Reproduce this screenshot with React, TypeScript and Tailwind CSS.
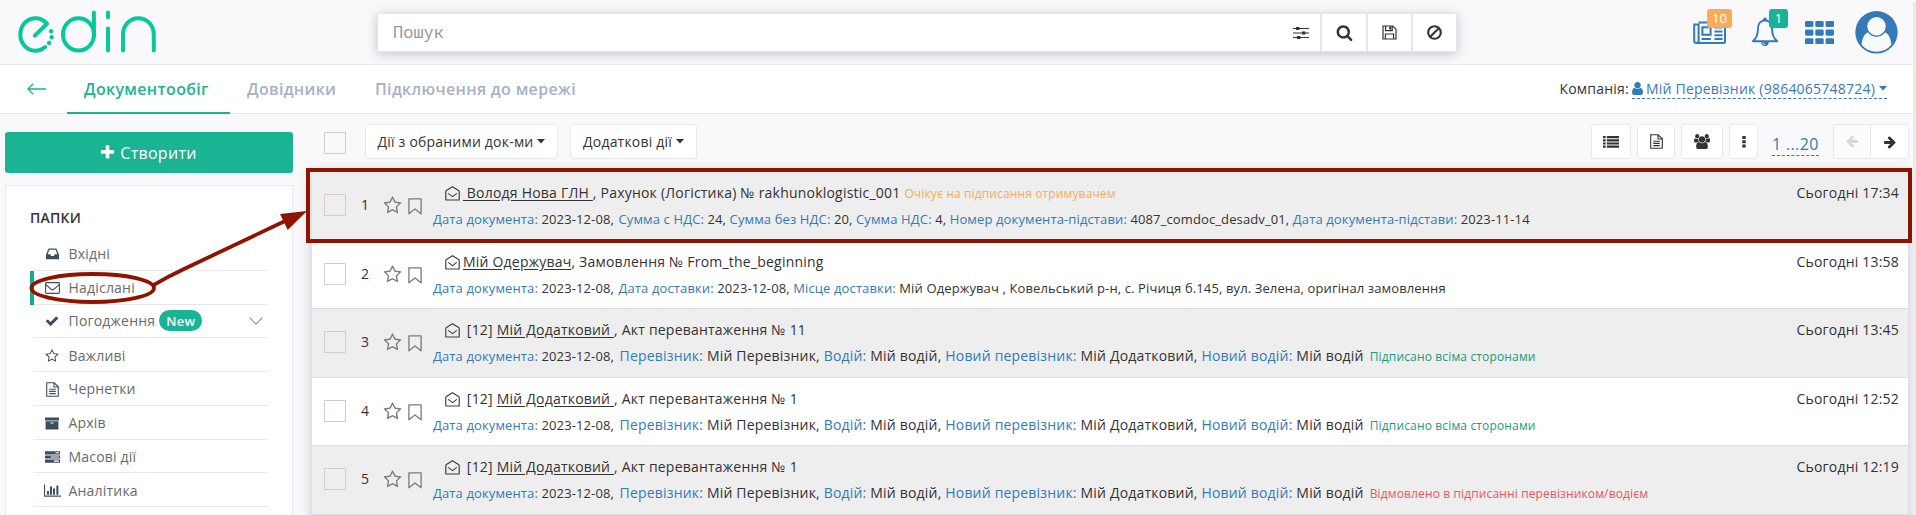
import React, { ReactNode } from "react";

/* ---------- icons ---------- */

type IconProps = { className?: string };

const PLUS =
  "M1600 736v192q0 40-28 68t-68 28h-416v416q0 40-28 68t-68 28h-192q-40 0-68-28t-28-68v-416h-416q-40 0-68-28t-28-68v-192q0-40 28-68t68-28h416v-416q0-40 28-68t68-28h192q40 0 68 28t28 68v416h416q40 0 68 28t28 68z";
const SEARCH =
  "M1216 832q0-185-131.5-316.5t-316.5-131.5-316.5 131.5-131.5 316.5 131.5 316.5 316.5 131.5 316.5-131.5 131.5-316.5zm512 832q0 52-38 90t-90 38q-54 0-90-38l-343-342q-179 124-399 124-143 0-273.5-55.5t-225-150-150-225-55.5-273.5 55.5-273.5 150-225 225-150 273.5-55.5 273.5 55.5 225 150 150 225 55.5 273.5q0 220-124 399l343 343q37 37 37 90z";
const CHECK =
  "M1671 566q0 40-28 68l-724 724-136 136q-28 28-68 28t-68-28l-136-136-362-362q-28-28-28-68t28-68l136-136q28-28 68-28t68 28l294 295 656-657q28-28 68-28t68 28l136 136q28 28 28 68z";
const ARROW_RIGHT =
  "M1600 960q0 54-37 91l-651 651q-39 37-91 37-51 0-90-37l-75-75q-38-38-38-91t38-91l293-293h-704q-52 0-84.5-37.5t-32.5-90.5v-128q0-53 32.5-90.5t84.5-37.5h704l-293-294q-38-36-38-90t38-90l75-75q38-38 90-38 53 0 91 38l651 651q37 35 37 90z";
const USER =
  "M1536 1399q0 109-62.5 187t-150.5 78h-854q-88 0-150.5-78t-62.5-187q0-85 8.5-160.5t31.5-152 58.5-131 94-89 134.5-34.5q131 128 313 128t313-128q76 0 134.5 34.5t94 89 58.5 131 31.5 152 8.5 160.5zm-256-887q0 159-112.5 271.5t-271.5 112.5-271.5-112.5-112.5-271.5 112.5-271.5 271.5-112.5 271.5 112.5 112.5 271.5z";
const STAR =
  "M1201 1004l306-297-422-62-189-382-189 382-422 62 306 297-73 421 378-199 377 199zm527-357q0 22-26 48l-363 354 86 500q1 7 1 20 0 50-41 50-19 0-40-12l-449-236-449 236q-22 12-40 12-21 0-31.5-14.5t-10.5-35.5q0-6 2-20l86-500-364-354q-25-27-25-48 0-37 56-46l502-73 225-455q19-41 49-41t49 41l225 455 502 73q56 9 56 46z";
const USERS =
  "M593 896q-162 5-265 128h-134q-82 0-138-40.5t-56-118.5q0-353 124-353 6 0 43.5 21t97.5 42.5 119 21.5q67 0 133-23-5 37-5 66 0 159 93 293zm1071 637q0 120-73 189.5t-194 69.5h-874q-121 0-194-69.5t-73-189.5q0-53 3.5-103.5t14-109 26.5-108.5 43-97.5 62-81 85.5-53.5 111.5-20q10 0 43 21.5t73 48 107 48 135 21.5 135-21.5 107-48 73-48 43-21.5q61 0 111.5 20t85.5 53.5 62 81 43 97.5 26.5 108.5 14 109 3.5 103.5zm-1024-1277q0 106-75 181t-181 75-181-75-75-181 75-181 181-75 181 75 75 181zm704 384q0 159-112.5 271.5t-271.5 112.5-271.5-112.5-112.5-271.5 112.5-271.5 271.5-112.5 271.5 112.5 112.5 271.5zm576 225q0 78-56 118.5t-138 40.5h-134q-103-123-265-128 93-134 93-293 0-29-5-66 66 23 133 23 59 0 119-21.5t97.5-42.5 43.5-21q124 0 124 353zm-128-609q0 106-75 181t-181 75-181-75-75-181 75-181 181-75 181 75 75 181z";

function Glyph({ d, className = "", box = "0 0 1792 1792" }: IconProps & { d: string; box?: string }) {
  return (
    <svg viewBox={box} fill="currentColor" className={`shrink-0 ${className}`}>
      <path d={d} />
    </svg>
  );
}

function Logo() {
  return (
    <svg viewBox="0 0 142 46" className="h-[46px] w-[142px]" fill="none" stroke="#07c79c" strokeWidth="4" strokeLinecap="round" strokeLinejoin="round">
      <path d="M18.8 27.6 31 15.8A15.2 16.3 0 1 0 29.2 39" />
      <ellipse cx="62.5" cy="26.4" rx="15.5" ry="16.2" />
      <path d="M77.9 4.4V26M92 4.4V9.2M92 20.6V42.6M107 42.6V26.4A15.4 16.2 0 0 1 137.8 26.4V42.6" />
      <g fill="#07c79c" stroke="none">
        <circle cx="35.1" cy="23.3" r="2.2" />
        <circle cx="35.7" cy="29.3" r="2.2" />
        <circle cx="33.1" cy="35" r="2.2" />
      </g>
    </svg>
  );
}

function Sliders() {
  return (
    <svg viewBox="0 0 16 14" className="h-[14px] w-4" stroke="currentColor" fill="currentColor">
      <path d="M0 2.5h16M0 7h16M0 11.5h16" strokeWidth="1.2" fill="none" />
      <path stroke="none" d="M3 1h3.4v3H3zM9 5.5h3.4v3H9zM4 10h3.4v3H4z" />
    </svg>
  );
}

function Floppy() {
  return (
    <svg viewBox="0 0 15 15" className="h-[15px] w-[15px]" fill="none" stroke="currentColor" strokeWidth="1.2">
      <path d="M1 1h9.8L14 4.2V14H1z M3.4 14V9h8.2v5" />
      <path d="M3.6 1v4.6h6.6V1" />
      <path d="M7.2 1.4h2v3.2h-2z" fill="currentColor" stroke="none" />
    </svg>
  );
}

function Ban() {
  return (
    <svg viewBox="0 0 15 15" className="h-[15px] w-[15px]" fill="none" stroke="currentColor" strokeWidth="2.1">
      <circle cx="7.5" cy="7.5" r="6.3" />
      <path d="M3.2 11.8 11.8 3.2" />
    </svg>
  );
}

function Newspaper() {
  return (
    <svg viewBox="0 0 34 24" className="h-6 w-[34px]" fill="none" stroke="currentColor" strokeWidth="2">
      <path d="M5.6 1.4H32V20.4Q32 22 30.2 22H3.6Q1.2 22 1.2 19.8V3.4H5.6V20Q5.6 22 3.6 22" />
      <path d="M9.4 6.2H17.6V13.8H9.4zM21.5 6.4H29.5M21.5 10.4H29.5M21.5 14.2H29.5M8.6 18H17.8M21.5 18H29.5" />
    </svg>
  );
}

function Bell() {
  return (
    <svg viewBox="0 0 28 30" className="h-[30px] w-7" fill="none" stroke="currentColor" strokeWidth="1.9" strokeLinejoin="round">
      <path d="M14 3.2C9.2 3.6 7 7.4 7 11.4C7 17.6 5.6 21.2 1.8 24.2H26.2C22.4 21.2 21 17.6 21 11.4C21 7.4 18.8 3.6 14 3.2z" />
      <circle cx="14" cy="2.2" r="1.8" fill="currentColor" stroke="none" />
      <path d="M10.2 25A3.8 4 0 0 0 17.8 25z" fill="currentColor" stroke="none" />
      <path d="M11.8 25.4A2.2 2.2 0 0 0 14 27.6" stroke="#f9f9fb" strokeWidth=".8" />
    </svg>
  );
}

function AppsGrid() {
  return (
    <svg viewBox="0 0 29 23" className="h-[23px] w-[29px]" fill="currentColor">
      {[0, 8.6, 17.2].map((y) => [0, 10.3, 20.6].map((x) => <rect key={`${x}-${y}`} x={x} y={y} width="8.4" height="6.1" rx="1.4" />))}
    </svg>
  );
}

function Avatar() {
  return (
    <svg viewBox="0 0 43 43" className="h-[43px] w-[43px]">
      <circle cx="21.5" cy="21.3" r="21.2" fill="#337ab7" />
      <path d="M6.6 33.8C7.2 26.8 9.8 22.2 13.4 21.2C18 27 25 27 29.6 21.2C33.2 22.2 35.8 26.8 36.4 33.8A19.4 19.4 0 0 1 6.6 33.8z" fill="#f9f9fb" />
      <circle cx="21.5" cy="15.4" r="10.4" fill="#337ab7" />
      <circle cx="21.5" cy="15.2" r="9.2" fill="#f9f9fb" />
    </svg>
  );
}

function Caret({ className = "" }: IconProps) {
  return <Glyph d="M0 0H8L4 4.6z" box="0 0 8 5" className={`h-[5px] w-2 ${className}`} />;
}

function ListIcon() {
  return (
    <svg viewBox="0 0 16 12" className="h-3 w-4" fill="currentColor">
      {[0, 3.2, 6.4, 9.6].map((y) => (
        <path key={y} d={`M0 ${y}h2.6v2.2H0zM3.8 ${y}H16v2.2H3.8z`} />
      ))}
    </svg>
  );
}

function FileText({ className = "" }: IconProps) {
  return (
    <svg viewBox="0 0 13 15" className={`h-[15px] w-[13px] ${className}`} fill="none" stroke="currentColor" strokeWidth="1.1">
      <path d="M.7 .8H8.2L12.3 4.8V14.2H.7zM8 .8V5H12.3M3.2 7.2H9.8M3.2 9.4H9.8M3.2 11.6H9.8" />
    </svg>
  );
}

function Dots() {
  return (
    <svg viewBox="0 0 4 12" className="h-3 w-1" fill="currentColor">
      <path d="M.3 0h3.4v3H.3zM.3 4.3h3.4v3H.3zM.3 8.6h3.4v3H.3z" />
    </svg>
  );
}

function Inbox() {
  return (
    <svg viewBox="0 0 13 12" className="h-3 w-[13px]" fill="currentColor" fillRule="evenodd">
      <path d="M2.6 .4H10.4L13 6.4V11.2H0V6.4zM3.4 1.8 1.6 6.2H4.2L5.2 8H7.8L8.8 6.2H11.4L9.6 1.8z" />
    </svg>
  );
}

function Envelope() {
  return (
    <svg viewBox="0 0 15 12" className="h-3 w-[15px]" fill="none" stroke="currentColor" strokeWidth="1.1">
      <rect x=".6" y=".6" width="13.8" height="10.8" rx=".8" />
      <path d="M.8 2.6 6.2 7.2Q7.5 8.2 8.8 7.2L14.2 2.6" />
    </svg>
  );
}

function ArchiveBox() {
  return (
    <svg viewBox="0 0 14 13" className="h-[13px] w-[14px]" fill="currentColor" fillRule="evenodd">
      <path d="M0 .4H14V3.4H0zM.6 4.2H13.4V12.6H.6zM5.4 5.4V6.6H8.6V5.4z" />
    </svg>
  );
}

function Tasks() {
  return (
    <svg viewBox="0 0 15 12" className="h-3 w-[15px]" fill="currentColor" fillRule="evenodd">
      <path d="M0 .2H15V3.4H0zM10.4 1.2V2.3H14V1.2zM0 4.4H15V7.6H0zM5.6 5.4V6.5H14V5.4zM0 8.6H15V11.8H0zM9 9.6V10.7H14V9.6z" />
    </svg>
  );
}

function BarChart() {
  return (
    <svg viewBox="0 0 17 13" className="h-[13px] w-[17px]" fill="currentColor">
      <path d="M0 .4H1.1V11.6H17V12.7H0zM3 7H5V10.7H3zM6 2.6H8V10.7H6zM9 4.6H11V10.7H9zM12.4 1.4H14.4V10.7H12.4z" />
    </svg>
  );
}

function OpenEnvelope() {
  return (
    <svg viewBox="0 0 15 15" className="mt-[14px] h-[15px] w-[15px] shrink-0" fill="none" stroke="#3c3c3c" strokeWidth="1.15" strokeLinejoin="round">
      <path d="M.8 5.4Q.8 4.8 1.4 4.4L7.5 .7L13.6 4.4Q14.2 4.8 14.2 5.4V14H.8z" />
      <path d="M3.2 7.4 7.5 10.6 11.8 7.4" />
    </svg>
  );
}

function Bookmark() {
  return (
    <svg viewBox="0 0 14 17" className="h-[17px] w-[14px]" fill="none" stroke="#7b7b7b" strokeWidth="1.3" strokeLinejoin="round">
      <path d="M.9 .8H13.1V15.8L7 10.9L.9 15.8z" />
    </svg>
  );
}

/* ---------- data ---------- */

type Field = { label: string; value: string; big?: boolean };
type Doc = {
  time: string;
  prefix?: string;
  partner: string;
  title: string;
  note?: ReactNode;
  fields: Field[];
  status?: ReactNode;
};

const date: Field = { label: "Дата документа:", value: "2023-12-08" };
const transport: Field[] = [
  date,
  { label: "Перевізник:", value: "Мій Перевізник", big: true },
  { label: "Водій:", value: "Мій водій", big: true },
  { label: "Новий перевізник:", value: "Мій Додатковий", big: true },
  { label: "Новий водій:", value: "Мій водій", big: true },
];
const signed = <span className="ml-[6px] text-xs tracking-[0.15px] text-[#1b9a7f]">Підписано всіма сторонами</span>;

const docs: Doc[] = [
  {
    time: "17:34",
    partner: " Володя Нова ГЛН ",
    title: ", Рахунок (Логістика) № rakhunoklogistic_001",
    note: <span className="ml-1 text-xs tracking-[0.13px] text-[#f8ac59]">Очікує на підписання отримувачем</span>,
    fields: [
      date,
      { label: "Сумма с НДС:", value: "24" },
      { label: "Сумма без НДС:", value: "20" },
      { label: "Сумма НДС:", value: "4" },
      { label: "Номер документа-підстави:", value: "4087_comdoc_desadv_01" },
      { label: "Дата документа-підстави:", value: "2023-11-14" },
    ],
  },
  {
    time: "13:58",
    partner: "Мій Одержувач",
    title: ", Замовлення № From_the_beginning",
    fields: [
      date,
      { label: "Дата доставки:", value: "2023-12-08" },
      { label: "Місце доставки:", value: "Мій Одержувач , Ковельський р-н, с. Річиця б.145, вул. Зелена, оригінал замовлення" },
    ],
  },
  { time: "13:45", prefix: " [12] ", partner: "Мій Додатковий ", title: ", Акт перевантаження № 11", fields: transport, status: signed },
  { time: "12:52", prefix: " [12] ", partner: "Мій Додатковий ", title: ", Акт перевантаження № 1", fields: transport, status: signed },
  {
    time: "12:19",
    prefix: " [12] ",
    partner: "Мій Додатковий ",
    title: ", Акт перевантаження № 1",
    fields: transport,
    status: <span className="ml-[6px] text-xs tracking-[0.13px] text-[#ed5565]">Відмовлено в підписанні перевізником/водієм</span>,
  },
];

const folders: { label: string; icon: ReactNode; active?: boolean; isNew?: boolean }[] = [
  { label: "Вхідні", icon: <Inbox /> },
  { label: "Надіслані", icon: <Envelope />, active: true },
  { label: "Погодження", icon: <Glyph d={CHECK} className="h-[14px] w-[14px]" />, isNew: true },
  { label: "Важливі", icon: <Glyph d={STAR} className="h-[14px] w-[14px]" /> },
  { label: "Чернетки", icon: <FileText /> },
  { label: "Архів", icon: <ArchiveBox /> },
  { label: "Масові дії", icon: <Tasks /> },
  { label: "Аналітика", icon: <BarChart /> },
];

/* ---------- sections ---------- */

function Header() {
  return (
    <header className="flex h-[65px] shrink-0 border-b border-[#e7eaec]">
      <div className="w-[377px] pt-2 pl-4">
        <Logo />
      </div>
      <div className="mt-[13px] flex h-[39px] w-[1080px] border border-[#e5e6e7] bg-white text-[#333] shadow-[0_2px_10px_rgba(90,95,140,0.35)]">
        <div className="flex flex-1 items-center pb-[2px] pl-[15px] font-['Noto_Sans_Mono','DejaVu_Sans_Mono',monospace] text-[17px] text-[#999]">Пошук</div>
        <div className="flex w-[42px] items-center pl-[15px]"><Sliders /></div>
        <div className="flex w-[46px] items-center justify-center border-l-2 border-[#e5e6e7]"><Glyph d={SEARCH} className="h-[17px] w-[17px]" /></div>
        <div className="flex w-[45px] items-center justify-center border-l-2 border-[#e5e6e7]"><Floppy /></div>
        <div className="flex w-[45px] items-center justify-center border-l-2 border-[#e5e6e7]"><Ban /></div>
      </div>
      <div className="flex flex-1 items-start pl-[236px] text-[#337ab7]">
        <div className="relative mt-[21px] w-[58px]">
          <Newspaper />
          <span className="absolute -top-3 left-[14px] flex h-[19px] w-[25px] items-center justify-center rounded-[3px] bg-[#f8ac59] text-[13px] text-white">10</span>
        </div>
        <div className="relative mt-[17px] w-[54px]">
          <Bell />
          <span className="absolute -top-2 left-[18px] flex h-[19px] w-[19px] items-center justify-center rounded-[3px] bg-[#1ab394] text-[13px] text-white">1</span>
        </div>
        <div className="mt-[21px] w-[50px]"><AppsGrid /></div>
        <div className="mt-[11px]"><Avatar /></div>
      </div>
    </header>
  );
}

function Nav() {
  return (
    <nav className="flex h-[49px] shrink-0 border-b border-[#e7eaec] bg-white pr-[26px]">
      <div className="flex w-[67px] items-center pl-[27px]">
        <svg viewBox="0 0 19 12" className="h-3 w-[19px]" fill="none" stroke="#1ab394" strokeWidth="1.3">
          <path d="M1 6H19M6.2 .8 1 6l5.2 5.2" />
        </svg>
      </div>
      <div className="-mb-px flex w-[163px] items-center border-b-2 border-[#1ab394] pl-[17px] text-base font-semibold tracking-[0.33px] text-[#1ab394]">Документообіг</div>
      <div className="flex w-[129px] items-center pl-[17px] text-base font-semibold tracking-[0.3px] text-[#a7b1c2]">Довідники</div>
      <div className="flex flex-1 items-center pl-[16px] text-base font-semibold tracking-[0.32px] text-[#a7b1c2]">Підключення до мережі</div>
      <div className="flex items-center text-sm tracking-[0.22px]">
        <span className="mr-[3px] text-[#333]">Компанія:</span>
        <span className="flex h-[19px] items-center border-b border-dashed border-[#337ab7] text-[#337ab7]">
          <Glyph d={USER} box="256 128 1280 1536" className="mr-[3px] mb-px h-[13px] w-[11px]" />
          Мій Перевізник (9864065748724)
          <Caret className="ml-1" />
        </span>
      </div>
    </nav>
  );
}

function Sidebar() {
  return (
    <aside className="flex w-[288px] shrink-0 flex-col pt-[18px]">
      <button className="flex h-[41px] shrink-0 items-center justify-center rounded-[3px] bg-[#1ab394] pr-[2px] text-base tracking-[0.3px] text-white">
        <Glyph d={PLUS} className="mr-1 h-[17px] w-[17px]" />
        Створити
      </button>
      <div className="mt-3 h-[340px] shrink-0 border border-[#e7eaf3] bg-white pl-7">
        <h2 className="-ml-1 pt-[22px] text-sm leading-5 font-semibold tracking-[0.2px] text-[#333]">ПАПКИ</h2>
        <ul className="mt-[9px] w-[234px]">
          {folders.map((f) => (
            <li
              key={f.label}
              className={`relative flex h-[33.75px] items-center border-b border-[#e7eaec] text-sm tracking-[0.2px] text-[#676a6c] ${f.isNew ? "" : "pt-[2px]"}`}
            >
              {f.active && <span className="absolute top-0 -left-1 h-[34px] w-1 bg-[#19aa8d]" />}
              <span className="flex w-[34.5px] justify-center pl-[2px] text-[#3c4d60]">{f.icon}</span>
              {f.label}
              {f.isNew && (
                <>
                  <span className="ml-1 flex h-[21px] w-[43px] items-center justify-center rounded-full bg-[#1ab394] text-[13px] font-semibold text-white">New</span>
                  <svg viewBox="0 0 14 8" className="mr-[5px] ml-auto h-2 w-[14px]" fill="none" stroke="#8a8d90" strokeWidth="1.1">
                    <path d="M.6 .7 7 7 13.4 .7" />
                  </svg>
                </>
              )}
            </li>
          ))}
        </ul>
      </div>
    </aside>
  );
}

function Toolbar() {
  const btn = "flex h-[35px] items-center justify-center rounded-[3px] border border-[#e7eaec] bg-white";
  return (
    <div className="-mr-px flex h-[58px] items-start pt-[10px] text-sm text-[#333]">
      <span className="mt-2 ml-[18px] h-[22px] w-[22px] border border-[#d2cfc9]" />
      <div className={`${btn} ml-[19px] w-[193px] gap-1 tracking-[0.2px]`}>Дії з обраними док-ми <Caret /></div>
      <div className={`${btn} ml-3 w-[127px] gap-1 tracking-[0.2px]`}>Додаткові дії <Caret /></div>
      <div className={`${btn} ml-auto w-10`}><ListIcon /></div>
      <div className={`${btn} ml-[6px] w-[38px]`}><FileText /></div>
      <div className={`${btn} ml-[6px] w-[42px]`}><Glyph d={USERS} box="0 0 1920 1792" className="h-[15px] w-4" /></div>
      <div className={`${btn} ml-[6px] w-[29px]`}><Dots /></div>
      <div className="mt-[10px] ml-[14px] h-[22px] w-[47px] border-b border-dashed border-[#337ab7] text-base leading-[21px] tracking-[0.35px] whitespace-nowrap text-[#337ab7]">1 ...20</div>
      <div className="ml-[14px] flex">
        <div className="flex h-[35px] w-[37px] items-center justify-center rounded-l-[3px] border border-r-0 border-[#e7eaec] bg-[#fcfcfd] text-[#d8d8d8]">
          <Glyph d={ARROW_RIGHT} className="h-[14px] w-[14px] rotate-180" />
        </div>
        <div className="flex h-[35px] w-[39px] items-center justify-center rounded-r-[3px] border border-[#e7eaec] bg-white">
          <Glyph d={ARROW_RIGHT} className="h-[14px] w-[14px]" />
        </div>
      </div>
    </div>
  );
}

function DocRow({ doc, index }: { doc: Doc; index: number }) {
  const tone = index % 2 === 0 ? "bg-[#eeeeee]" : "bg-white";
  return (
    <li className={`flex h-[68.5px] items-start border-b border-[#dcdddf] pr-[9px] pl-3 text-sm leading-5 text-[#333] ${tone}`}>
      <span className="mt-[22px] h-[22px] w-[22px] shrink-0 border border-[#d2cfc9]" />
      <span className="mt-[23px] ml-[15px] w-[22px] shrink-0">{index + 1}</span>
      <Glyph d={STAR} className="mt-[24px] h-[19px] w-[19px] text-[#7b7b7b]" />
      <span className="mt-[26px] ml-[6px] w-[25px] shrink-0"><Bookmark /></span>
      <div className="min-w-0 flex-1">
        <div className="flex pl-3">
          <OpenEnvelope />
          <p className="ml-[3px] pt-[11px] tracking-[0.21px] whitespace-pre">
            {doc.prefix}
            <span className="underline underline-offset-2">{doc.partner}</span>
            {doc.title}
            {doc.note}
          </p>
        </div>
        <p className="mt-[6px] text-[13px] leading-5 tracking-[0.12px] whitespace-pre">
          {doc.fields.map((f, i) => (
            <span key={f.label} className={`${f.big ? "text-sm tracking-[0.19px]" : ""} ${i === 1 ? (f.big ? "ml-[2px]" : "ml-px") : ""}`}>
              <span className="text-[#337ab7]">{f.label}</span> {f.value}
              {i < doc.fields.length - 1 && ", "}
            </span>
          ))}
          {doc.status}
        </p>
      </div>
      <time className="pt-[11px] tracking-[0.2px]">Сьогодні {doc.time}</time>
    </li>
  );
}

function Annotations() {
  return (
    <>
      <div className="absolute top-[168px] left-[306px] h-[75px] w-[1606px] border-4 border-[#8e1400]" />
      <svg viewBox="0 0 320 515" className="absolute top-0 left-0 h-[515px] w-80" fill="none" stroke="#8e1400" strokeWidth="3.8">
        <ellipse cx="92.7" cy="288" rx="61.3" ry="14" />
        <path d="M153 285.4Q167 277 184 269L284 221.5" />
        <path d="M280 214 307 211 287.7 230z" fill="#8e1400" stroke="none" />
      </svg>
    </>
  );
}

export default function App() {
  return (
    <div className="relative flex h-[515px] w-[1916px] overflow-hidden bg-[#f9f9fb] font-['Open_Sans','Noto_Sans',sans-serif]">
      <div className="flex w-[1913px] shrink-0 flex-col">
        <Header />
        <Nav />
        <div className="flex min-h-0 flex-1 pr-[5px] pl-[5px]">
          <Sidebar />
          <main className="ml-[13px] flex-1">
            <Toolbar />
            <ul className="ml-[6px] flex flex-col bg-white shadow-[0_0_12px_rgba(90,95,140,0.35)]">
              {docs.map((d, i) => (
                <DocRow key={i} doc={d} index={i} />
              ))}
              <li className="h-5 shrink-0" />
            </ul>
          </main>
        </div>
      </div>
      <div className="mt-[2px] w-[3px] bg-[#ebebee]" />
      <Annotations />
    </div>
  );
}
